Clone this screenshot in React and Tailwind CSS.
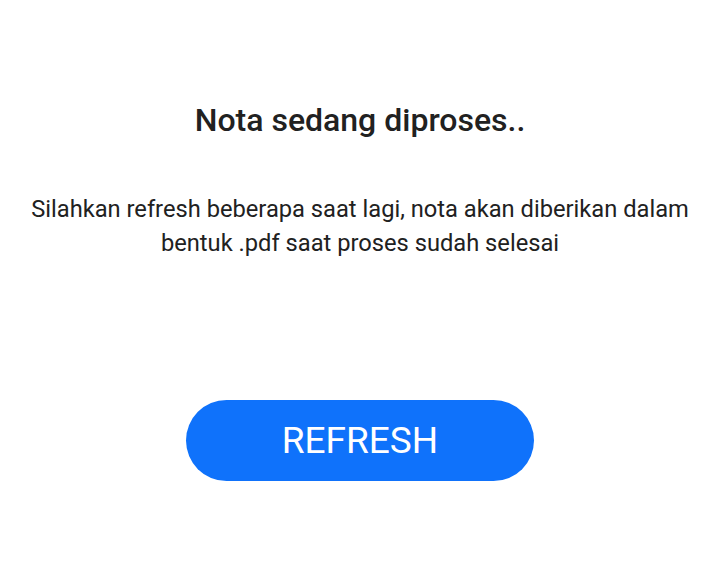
import React from 'react';

const App = () => {
  return (
    <div className="min-h-screen w-full bg-white flex flex-col items-center pl-[6px] font-['Roboto',sans-serif]">
      <h1 className="mt-[100px] text-[32px] leading-[40px] font-medium text-[#212121]">
        Nota sedang diproses..
      </h1>

      <p className="mt-[52px] text-center text-[23.7px] leading-[34px] text-[#212121] whitespace-nowrap">
        Silahkan refresh beberapa saat lagi, nota akan diberikan dalam
        <br />
        bentuk .pdf saat proses sudah selesai
      </p>

      <button className="mt-[140px] w-[348px] h-[81px] rounded-full bg-[#0f72fb] text-white text-[37px] flex items-center justify-center">
        REFRESH
      </button>
    </div>
  );
};

export default App;
